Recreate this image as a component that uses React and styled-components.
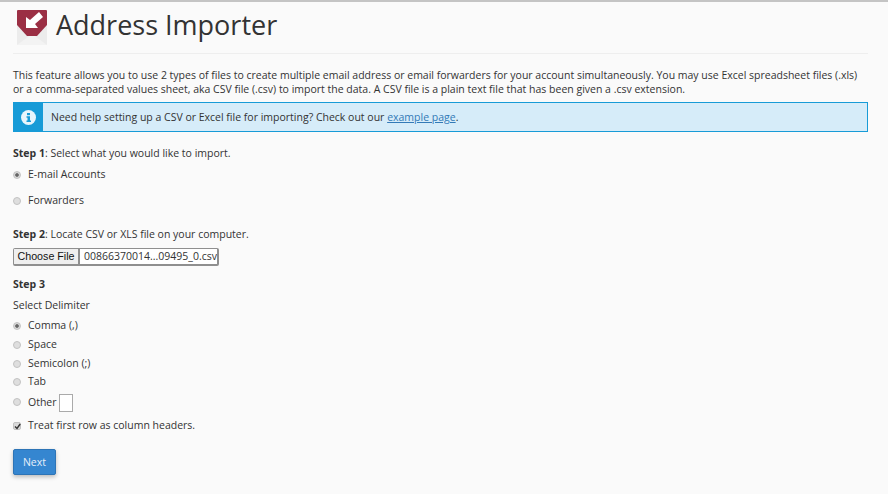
import React from 'react'
import styled, { createGlobalStyle } from 'styled-components'

const Global = createGlobalStyle`
  html, body {
    margin: 0;
    padding: 0;
    height: 100%;
    background: #fafafa;
  }
  body {
    font-family: "Open Sans", "Liberation Sans", sans-serif;
    font-size: 10.5px;
    line-height: 14px;
    color: #333;
    overflow: hidden;
  }
`

const Page = styled.div`
  height: 494px;
  box-sizing: border-box;
  padding: 0 20px 0 13px;
  border-top: 2px solid #c4c4c4;
`

const Header = styled.header`
  display: flex;
  align-items: flex-start;
  height: 51px;
  border-bottom: 1px solid #eeeeee;
`

const Logo = styled.svg`
  width: 32px;
  height: 36px;
  margin: 8px 0 0 3px;
  flex: none;
`

const Title = styled.h1`
  margin: 5px 0 0 8px;
  font-size: 27px;
  line-height: 36px;
  font-weight: 400;
  color: #333;
`

const Intro = styled.p`
  margin: 14px 0 0;
  height: 28px;
  white-space: nowrap;
`

const Notice = styled.div`
  display: flex;
  height: 30px;
  box-sizing: border-box;
  margin-top: 6px;
  background: #d6ecf9;
  border: 1px solid #179bd7;
  align-items: stretch;
`

const NoticeIcon = styled.div`
  width: 30px;
  flex: none;
  margin: -1px 0 -1px -1px;
  background: #179bd7;
  display: flex;
  align-items: center;
  justify-content: center;
  svg { display: block; }
`

const NoticeText = styled.div`
  padding-left: 8px;
  display: flex;
  align-items: center;
  white-space: pre;
`

const Link = styled.a`
  color: #337ab7;
  text-decoration: underline;
`

const Step = styled.p`
  margin: ${(p) => p.$top}px 0 0;
  white-space: nowrap;
`

const Option = styled.label`
  display: flex;
  align-items: center;
  height: 14px;
  margin-top: ${(p) => p.$top}px;
  white-space: nowrap;
`

const Radio = styled.span`
  width: 6px;
  height: 6px;
  flex: none;
  margin: ${(p) => (p.$raised ? '-1px' : '2px')} 7px 0 0;
  border-radius: 50%;
  background: ${(p) => (p.$on ? 'radial-gradient(circle, #666 0 1.4px, #d8d8d8 2.2px)' : '#dedede')};
  border: 1px solid #c2c2c2;
`

const Check = styled.span`
  width: 6px;
  height: 6px;
  flex: none;
  margin: 2px 7px 0 0;
  border-radius: 2px;
  background: #dadada;
  border: 1px solid #c2c2c2;
  display: flex;
  align-items: center;
  justify-content: center;
  svg { display: block; flex: none; }
`

const FileField = styled.div`
  display: flex;
  width: 206px;
  height: 18px;
  box-sizing: border-box;
  margin-top: 7px;
  border: 1px solid #8f8f8f;
  border-right-width: 2px;
  border-bottom-width: 2px;
  border-radius: 2px;
  background: #fff;
  overflow: hidden;
`

const FileButton = styled.button`
  width: 66px;
  height: 15px;
  flex: none;
  padding: 0;
  border: 0;
  border-right: 2px solid #8f8f8f;
  background: #efefef;
  font-family: "Liberation Sans", Arial, sans-serif;
  font-size: 10.7px;
  line-height: 15px;
  color: #111;
`

const FileName = styled.span`
  padding-left: 4px;
  font-size: 10.5px;
  line-height: 15px;
  white-space: nowrap;
`

const OtherInput = styled.input`
  width: 14px;
  height: 18px;
  flex: none;
  box-sizing: border-box;
  margin: 1px 0 0 2px;
  padding: 0;
  border: 1px solid #aaa;
  background: #fff;
`

const NextButton = styled.button`
  display: block;
  width: 43px;
  height: 26px;
  margin-top: 17px;
  padding: 0;
  background: #3586d0;
  border: 1px solid #2d74b6;
  border-radius: 2px;
  box-shadow: 0 2px 4px rgba(0, 0, 0, 0.25);
  color: #e6effa;
  font-family: inherit;
  font-size: 10.5px;
`

const App = () => (
  <>
    <Global />
    <Page>
      <Header>
        <Logo viewBox="0 0 32 36">
          <path d="M1 12 H31 V35 H1 Z" fill="#ececec" />
          <path d="M1 35 L16 24 L31 35 Z" fill="#f3f3f3" />
          <path d="M2 0 H30 Q31 0 31 1 V15 L21 26 H11 L1 15 V1 Q1 0 2 0 Z" fill="#9b2f44" />
          <path d="M23 2 L27 7 L19 14 L22 18 H10 V7 L14 10 Z" fill="#fff" />
        </Logo>
        <Title>Address Importer</Title>
      </Header>
      <Intro>
        This feature allows you to use 2 types of files to create multiple email address or email forwarders for your account simultaneously. You may use Excel spreadsheet files (.xls)
        <br />
        or a comma-separated values sheet, aka CSV file (.csv) to import the data. A CSV file is a plain text file that has been given a .csv extension.
      </Intro>
      <Notice>
        <NoticeIcon>
          <svg width="15" height="15" viewBox="0 0 15 15">
            <circle cx="7.5" cy="7.5" r="7.5" fill="#e8f5fc" />
            <rect x="6" y="3" width="3" height="2.2" fill="#179bd7" />
            <path d="M5.5 6.3 H9 V10.6 H10 V12 H5.5 V10.6 H6.5 V7.7 H5.5 Z" fill="#179bd7" />
          </svg>
        </NoticeIcon>
        <NoticeText>
          Need help setting up a CSV or Excel file for importing? Check out our <Link href="#">example page</Link>.
        </NoticeText>
      </Notice>
      <Step $top={14}>
        <b>Step 1</b>: Select what you would like to import.
      </Step>
      <Option $top={7}>
        <Radio $on />
        E-mail Accounts
      </Option>
      <Option $top={12}>
        <Radio />
        Forwarders
      </Option>
      <Step $top={20}>
        <b>Step 2</b>: Locate CSV or XLS file on your computer.
      </Step>
      <FileField>
        <FileButton type="button">Choose File</FileButton>
        <FileName>00866370014...09495_0.csv</FileName>
      </FileField>
      <Step $top={11}>
        <b>Step 3</b>
      </Step>
      <Step $top={7}>Select Delimiter</Step>
      <Option $top={6}>
        <Radio $on />
        Comma (,)
      </Option>
      <Option $top={5}>
        <Radio />
        Space
      </Option>
      <Option $top={5}>
        <Radio />
        Semicolon (;)
      </Option>
      <Option $top={4}>
        <Radio />
        Tab
      </Option>
      <Option $top={7}>
        <Radio $raised />
        Other
        <OtherInput type="text" />
      </Option>
      <Option $top={9}>
        <Check>
          <svg width="7" height="7" viewBox="0 0 7 7">
            <path d="M1 3.5 L3 5.5 L6.2 1" fill="none" stroke="#333" strokeWidth="1.4" />
          </svg>
        </Check>
        Treat first row as column headers.
      </Option>
      <NextButton type="button">Next</NextButton>
    </Page>
  </>
)

export default App
